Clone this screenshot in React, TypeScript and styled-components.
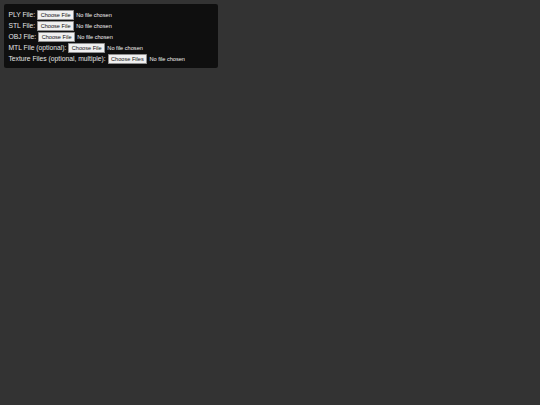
import React from "react";
import styled, { createGlobalStyle } from "styled-components";

const GlobalStyle = createGlobalStyle`
  html, body {
    margin: 0;
    padding: 0;
    background: #333333;
  }
  body {
    font-family: "Liberation Sans", Arial, sans-serif;
  }
`;

// the page was taken at 1280x960 and shrunk to 540x405
const StyledViewer = styled.div`
  zoom: 0.421875;
  box-sizing: border-box;
  width: 1280px;
  height: 960px;
  padding: 10px;
  background: #333333;
`;

const StyledPanel = styled.div`
  box-sizing: border-box;
  width: 507px;
  padding: 14px 10px 10px;
  background: rgba(0, 0, 0, 0.7);
  border-radius: 5px;
  color: #e6e6e6;
  font-size: 16px;
`;

const StyledRow = styled.div`
  margin-bottom: 3px;
  white-space: nowrap;

  &:last-child {
    margin-bottom: 0;
  }
`;

const StyledLabel = styled.label`
  font-size: 16px;
`;

const StyledFileInput = styled.input`
  font-family: "Liberation Sans", Arial, sans-serif;
  font-size: 13.33px;
  color: #f2f2f2;

  &::file-selector-button {
    font-family: "Liberation Sans", Arial, sans-serif;
    font-size: 13.33px;
    color: #111111;
    background: #f0f0f0;
    border: 1px solid #8f8f8f;
    border-radius: 2px;
    padding: 2px 6px;
    margin-right: 5px;
  }
`;

const fields = [
  { id: "ply", label: "PLY File:", multiple: false },
  { id: "stl", label: "STL File:", multiple: false },
  { id: "obj", label: "OBJ File:", multiple: false },
  { id: "mtl", label: "MTL File (optional):", multiple: false },
  { id: "tex", label: "Texture Files (optional, multiple):", multiple: true },
];

const App = () => {
  return (
    <>
      <GlobalStyle />
      <StyledViewer>
        <StyledPanel>
          {fields.map((f) => (
            <StyledRow key={f.id}>
              <StyledLabel htmlFor={f.id}>{f.label}</StyledLabel>{" "}
              <StyledFileInput id={f.id} type="file" multiple={f.multiple} />
            </StyledRow>
          ))}
        </StyledPanel>
      </StyledViewer>
    </>
  );
};

export default App;
